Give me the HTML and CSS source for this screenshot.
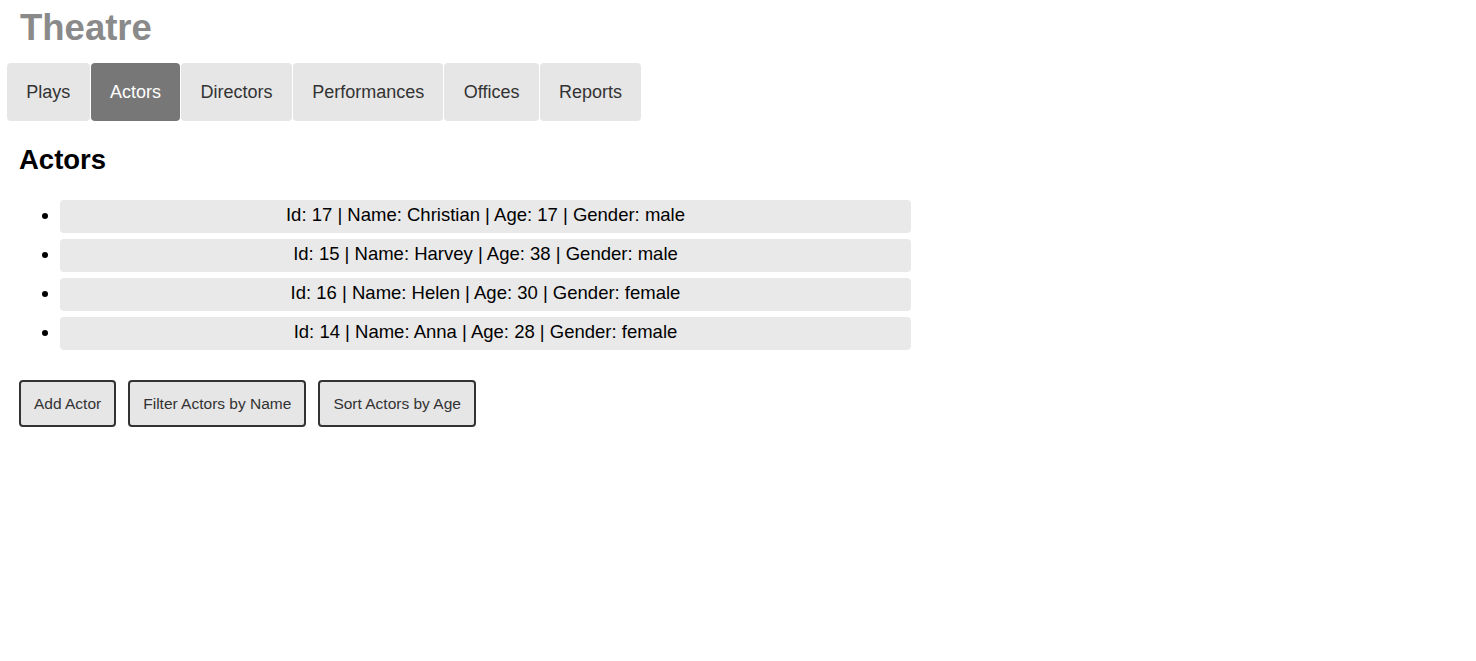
FILE: index.html
```html
<!DOCTYPE html>
<html lang="en">
<head>
<meta charset="utf-8">
<title>Theatre</title>
<link rel="stylesheet" href="styles.css">
</head>
<body>
<header class="header">
  <h1 class="site-title">Theatre</h1>
  <nav class="tabs">
    <a class="tab" href="#">Plays</a>
    <a class="tab tab-active" href="#">Actors</a>
    <a class="tab" href="#">Directors</a>
    <a class="tab" href="#">Performances</a>
    <a class="tab" href="#">Offices</a>
    <a class="tab" href="#">Reports</a>
  </nav>
</header>
<main class="content">
  <h2 class="section-title">Actors</h2>
  <ul class="actor-list">
    <li class="actor">Id: 17 | Name: Christian | Age: 17 | Gender: male</li>
    <li class="actor">Id: 15 | Name: Harvey | Age: 38 | Gender: male</li>
    <li class="actor">Id: 16 | Name: Helen | Age: 30 | Gender: female</li>
    <li class="actor">Id: 14 | Name: Anna | Age: 28 | Gender: female</li>
  </ul>
  <div class="actions">
    <button class="btn">Add Actor</button>
    <button class="btn">Filter Actors by Name</button>
    <button class="btn">Sort Actors by Age</button>
  </div>
</main>
</body>
</html>
```
FILE: styles.css
```css
* { box-sizing: border-box; }
html, body {
  margin: 0;
  padding: 0;
  background: #ffffff;
  font-family: "Liberation Sans", Arial, sans-serif;
  color: #000;
}
.header {
  padding: 7px 0 0 7px;
}
.site-title {
  margin: 0 0 15px 13px;
  font-size: 36.5px;
  line-height: 41px;
  font-weight: bold;
  color: #8a8a8a;
}
.tabs {
  display: flex;
  gap: 1px;
}
.tab {
  display: block;
  padding: 18.5px 19.3px 18.5px;
  font-size: 18px;
  line-height: 21px;
  color: #333333;
  background: #e6e6e6;
  text-decoration: none;
  border-radius: 4px;
}
.tab-active {
  background: #777777;
  color: #ffffff;
}
.content {
  padding: 0 19px;
}
.section-title {
  margin: 23px 0 24px;
  font-size: 27.5px;
  line-height: 32px;
  font-weight: bold;
}
.actor-list {
  margin: 0;
  padding-left: 41px;
  width: 892px;
  display: flex;
  flex-direction: column;
  gap: 6px;
}
.actor {
  background: #e9e9e9;
  border-radius: 4px;
  padding: 4px 0 8px;
  font-size: 18.5px;
  line-height: 21px;
  text-align: center;
}
.actions {
  display: flex;
  gap: 12px;
  margin-top: 30px;
}
.btn {
  font-family: "Liberation Sans", Arial, sans-serif;
  font-size: 15.5px;
  line-height: 17px;
  color: #333333;
  background: #e6e6e6;
  border: 2px solid #333333;
  border-radius: 4px;
  padding: 13px 13px;
}
```
